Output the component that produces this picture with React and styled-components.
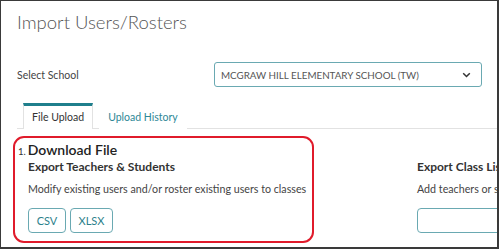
import React from "react"
import styled, { createGlobalStyle } from "styled-components"

const GlobalStyle = createGlobalStyle`
  html, body {
    margin: 0;
    padding: 0;
    background: #ffffff;
  }
  body {
    font-family: Lato, "Open Sans", "Liberation Sans", sans-serif;
    color: #333;
  }
`

const Frame = styled.div`
  width: 496px;
  height: 246px;
  border-top: 1px solid #3a3a3a;
  border-left: 1px solid #3a3a3a;
  border-right: 2px solid #3a3a3a;
  border-bottom: 2px solid #3a3a3a;
  overflow: hidden;
  background: #fff;
`

const Title = styled.h1`
  margin: 0;
  padding: 10px 0 0 16px;
  font-size: 18.5px;
  font-weight: 300;
  color: #555;
  line-height: 22px;
`

const SchoolRow = styled.div`
  display: flex;
  align-items: center;
  padding: 29px 15px 0 16px;
`

const Label = styled.span`
  width: 197px;
  font-size: 10.5px;
  color: #444;
`

const Select = styled.div`
  flex: 1;
  height: 23px;
  display: flex;
  align-items: center;
  justify-content: space-between;
  padding: 0 10px 0 6px;
  border: 1px solid #6aa9b2;
  border-radius: 3px;
  font-size: 9.8px;
  color: #555;
  text-transform: uppercase;
`

const TabBar = styled.div`
  display: flex;
  gap: 6px;
  margin: 16px 0 0 16px;
  padding-left: 6px;
  border-bottom: 1px solid #e2e2e2;
`

const Tab = styled.div`
  height: 21px;
  padding: 0 8px 2px;
  display: flex;
  align-items: center;
  font-size: 10.5px;
  color: ${p => (p.$active ? "#333" : "#2e8796")};
  border-top: 3px solid ${p => (p.$active ? "#1f7f8c" : "transparent")};
  border-left: 1px solid ${p => (p.$active ? "#e2e2e2" : "transparent")};
  border-right: 1px solid ${p => (p.$active ? "#e2e2e2" : "transparent")};
  margin-bottom: -1px;
  background: #fff;
`

const Content = styled.div`
  display: flex;
  padding: 7px 0 0 12px;
`

const Highlight = styled.section`
  width: 287px;
  height: 96px;
  padding: 3px 7px 4px 3px;
  border: 2px solid #e01b2b;
  border-radius: 11px;
`

const StepHead = styled.div`
  display: flex;
  align-items: baseline;
`

const StepNum = styled.span`
  font-size: 9.5px;
  color: #333;
  margin-right: 2px;
`

const StepTitle = styled.h2`
  margin: 0;
  font-size: 14px;
  font-weight: 600;
  color: #222;
  line-height: 18px;
`

const Column = styled.div`
  padding-left: ${p => p.$indent || 0}px;
  padding-top: ${p => p.$top || 0}px;
  flex-shrink: 0;
`

const SubTitle = styled.h3`
  margin: 0;
  font-size: 12px;
  font-weight: 700;
  color: #333;
  line-height: 16px;
  white-space: nowrap;
`

const Desc = styled.p`
  margin: 6px 0 0;
  font-size: 10.7px;
  color: #444;
  line-height: 16px;
  white-space: nowrap;
`

const Buttons = styled.div`
  display: flex;
  gap: 4px;
  margin-top: 11px;
`

const Button = styled.button`
  height: 25px;
  width: ${p => p.$w}px;
  padding: 0;
  border: 1px solid #6aa9b2;
  border-radius: 4px;
  background: #fff;
  font-family: inherit;
  font-size: 11px;
  color: #2c7f8b;
`

const Chevron = () => (
  <svg width="9" height="6" viewBox="0 0 9 6">
    <path d="M1.2 1.2 L4.5 4.5 L7.8 1.2" fill="none" stroke="#333" strokeWidth="1.5" />
  </svg>
)

export default function App() {
  return (
    <>
      <GlobalStyle />
      <Frame>
        <Title>Import Users/Rosters</Title>
        <SchoolRow>
          <Label>Select School</Label>
          <Select>
            <span>McGraw Hill Elementary School (TW)</span>
            <Chevron />
          </Select>
        </SchoolRow>
        <TabBar>
          <Tab $active>File Upload</Tab>
          <Tab>Upload History</Tab>
        </TabBar>
        <Content>
          <Highlight>
            <StepHead>
              <StepNum>1.</StepNum>
              <StepTitle>Download File</StepTitle>
            </StepHead>
            <Column $indent={10}>
              <SubTitle>Export Teachers &amp; Students</SubTitle>
              <Desc>Modify existing users and/or roster existing users to classes</Desc>
              <Buttons>
                <Button $w={38}>CSV</Button>
                <Button $w={43}>XLSX</Button>
              </Buttons>
            </Column>
          </Highlight>
          <Column $indent={103} $top={23}>
            <SubTitle>Export Class List</SubTitle>
            <Desc>Add teachers or students to classes</Desc>
            <Buttons>
              <Button $w={180}>CSV</Button>
            </Buttons>
          </Column>
        </Content>
      </Frame>
    </>
  )
}
